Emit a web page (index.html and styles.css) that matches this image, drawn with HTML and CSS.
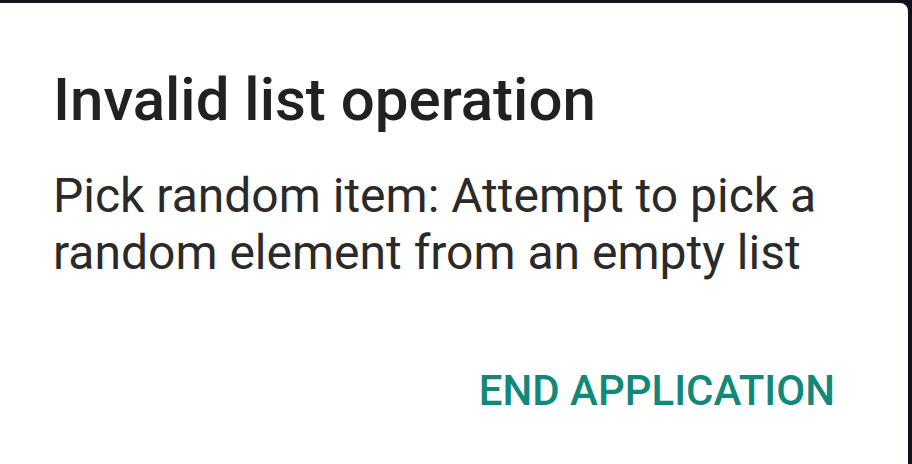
FILE: index.html
```html
<!DOCTYPE html>
<html lang="en">
<head>
    <meta charset="UTF-8">
    <meta name="viewport" content="width=device-width, initial-scale=1.0">
    <title>Invalid list operation</title>
    <link rel="stylesheet" href="styles.css">
</head>
<body>
    <div class="dialog">
        <h1 class="dialog-title">Invalid list operation</h1>
        <p class="dialog-message">Pick random item: Attempt to pick a random element from an empty list</p>
        <div class="dialog-actions">
            <button class="dialog-button">END APPLICATION</button>
        </div>
    </div>
</body>
</html>
```

FILE: styles.css
```css
html, body {
    height: 100%;
}

body {
    margin: 0;
    background-color: #10131c;
    font-family: Roboto, "Noto Sans", sans-serif;
    overflow: hidden;
}

.dialog {
    box-sizing: border-box;
    width: 908px;
    height: 100%;
    margin-top: 3px;
    padding: 62px 73px 0 53px;
    background-color: #ffffff;
    border-radius: 0 8px 0 0;
}

.dialog-title {
    margin: 0;
    font-size: 60px;
    font-weight: 500;
    line-height: 70px;
    color: #212121;
}

.dialog-message {
    margin: 32px 0 0;
    font-size: 48px;
    line-height: 57px;
    color: #2a2a2a;
}

.dialog-actions {
    display: flex;
    justify-content: flex-end;
    margin-top: 85px;
}

.dialog-button {
    padding: 0;
    border: none;
    background: none;
    font-family: inherit;
    font-size: 42px;
    font-weight: 500;
    line-height: 50px;
    color: #12887a;
}
```
